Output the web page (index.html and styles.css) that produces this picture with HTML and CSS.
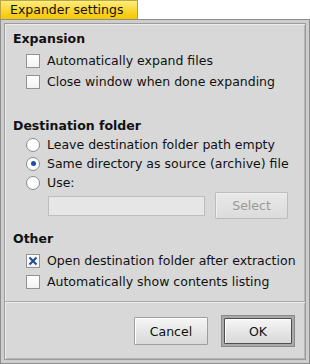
FILE: index.html
```html
<!DOCTYPE html>
<html lang="en">
<head>
<meta charset="UTF-8">
<title>Expander settings</title>
<link rel="stylesheet" href="styles.css">
</head>
<body>

<div class="tab">Expander settings</div>

<div class="win">
  <div class="content">
    <div class="main">

      <div class="group">
        <div class="head">Expansion</div>
        <div class="row"><span class="check"></span>Automatically expand files</div>
        <div class="row"><span class="check"></span>Close window when done expanding</div>
      </div>

      <div class="group dest">
        <div class="head">Destination folder</div>
        <div class="row radio-row"><span class="radio"></span>Leave destination folder path empty</div>
        <div class="row radio-row"><span class="radio on"></span>Same directory as source (archive) file</div>
        <div class="row radio-row"><span class="radio"></span>Use:</div>
        <div class="path-row">
          <span class="field"></span>
          <span class="btn disabled select">Select</span>
        </div>
      </div>

      <div class="group other">
        <div class="head">Other</div>
        <div class="row"><span class="check on"><svg viewBox="0 0 12 12" width="12" height="12"><path d="M2.5 2.5L9.5 9.5M9.5 2.5L2.5 9.5" stroke="#1b4a9c" stroke-width="2" fill="none"/></svg></span>Open destination folder after extraction</div>
        <div class="row"><span class="check"></span>Automatically show contents listing</div>
      </div>

    </div>

    <div class="actions">
      <span class="btn cancel">Cancel</span>
      <span class="default"><span class="btn ok">OK</span></span>
    </div>
  </div>
</div>

</body>
</html>
```

FILE: styles.css
```css
*{margin:0;padding:0;box-sizing:border-box}
body{background:#fff;font-family:"DejaVu Sans","Noto Sans",sans-serif;font-size:12.5px;color:#111}

/* title tab */
.tab{width:138px;height:19px;line-height:18px;padding-left:9px;background:linear-gradient(#ffec7c,#fbd32a 60%,#f5c600);border:1px solid #b8a84a;border-bottom:none;border-right-color:#9a9a9a;color:#111;white-space:nowrap}

/* window frame */
.win{height:345px;border:1px solid #8e8e8e;padding:3px;background:#cdcdcd}
.content{height:100%;display:flex;flex-direction:column;border:1px solid #9c9c9c;background:#d8d8d8;box-shadow:inset 1px 1px 0 #ececec,inset -1px -1px 0 #b6b6b6}

.main{padding:7px 0 9px 8px;border-bottom:1px solid #a9a9a9}
.head{font-weight:bold;line-height:15px;margin-bottom:4px}
.row{height:21px;display:flex;align-items:center;padding-left:13px;white-space:nowrap}
.radio-row{height:19px}
.dest{margin-top:26px}
.dest .head{margin-bottom:2px}
.other{margin-top:12px}

.check{width:14px;height:14px;margin-right:7px;border:1px solid #929292;background:linear-gradient(#fff,#f3f3f3);display:flex;align-items:center;justify-content:center;flex:none}
.radio{width:14px;height:14px;margin-right:7px;border:1px solid #8e8e8e;border-radius:50%;background:radial-gradient(circle at 50% 40%,#fff 55%,#ececec);display:flex;align-items:center;justify-content:center;flex:none}
.radio.on::after{content:"";width:5px;height:5px;border-radius:50%;background:#1b4fa6}

.path-row{height:27px;display:flex;align-items:center;padding-left:35px}
.field{width:157px;height:20px;border:1px solid #bdbdbd;background:#e6e6e6;margin-right:10px}

/* buttons */
.btn{display:flex;align-items:center;justify-content:center;border:1px solid #9e9e9e;border-radius:1px;background:linear-gradient(#f6f6f6,#e4e4e4 60%,#d9d9d9);box-shadow:inset 1px 1px 0 #fff}
.select{width:73px;height:27px;color:#9a9a9a;border-color:#bcbcbc;background:linear-gradient(#e8e8e8,#dcdcdc);box-shadow:inset 1px 1px 0 #efefef}

.actions{flex:1;border-top:1px solid #efefef;display:flex;align-items:center;justify-content:flex-end;padding-right:10px}
.cancel{width:74px;height:28px;margin-right:13px}
.default{width:74px;height:32px;border:1px solid #8a8a8a;padding:2px;background:#a9a9a9;display:flex}
.ok{flex:1;border-color:#4e4e4e}
```
